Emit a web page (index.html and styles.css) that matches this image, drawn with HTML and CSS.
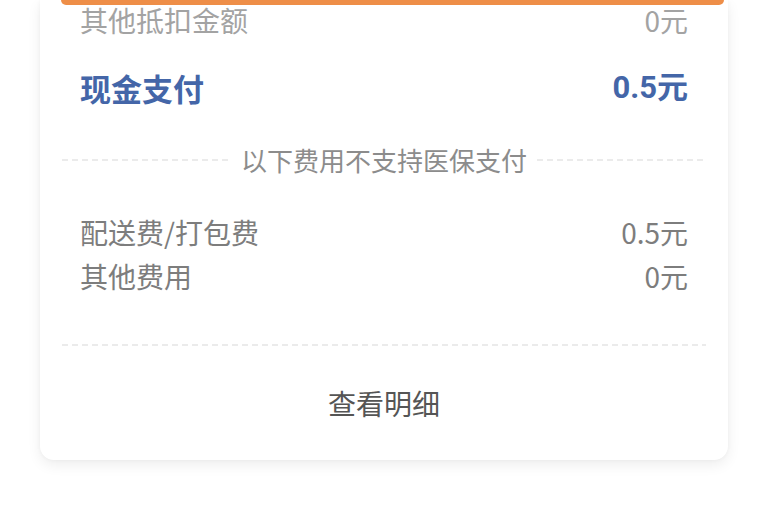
FILE: index.html
```html
<!DOCTYPE html>
<html lang="zh-CN">
<head>
<meta charset="utf-8">
<title>费用明细</title>
<link rel="stylesheet" href="styles.css">
</head>
<body>
<div class="card">
  <div class="top-bar"></div>
  <div class="row row-muted first">
    <span>其他抵扣金额</span>
    <span>0元</span>
  </div>
  <div class="row row-total">
    <span>现金支付</span>
    <span>0.5元</span>
  </div>
  <div class="divider">
    <span class="dash"></span>
    <span class="divider-text">以下费用不支持医保支付</span>
    <span class="dash"></span>
  </div>
  <div class="row row-fee r3">
    <span>配送费/打包费</span>
    <span>0.5元</span>
  </div>
  <div class="row row-fee r4">
    <span>其他费用</span>
    <span>0元</span>
  </div>
  <div class="dash full"></div>
  <div class="footer">查看明细</div>
</div>
</body>
</html>
```
FILE: styles.css
```css
html, body {
  margin: 0;
  padding: 0;
  background: #ffffff;
}
body {
  font-family: "Noto Sans CJK SC", "Noto Sans", sans-serif;
  width: 768px;
  height: 510px;
  overflow: hidden;
}
.card {
  position: relative;
  margin-left: 40px;
  width: 688px;
  height: 460px;
  box-sizing: border-box;
  padding: 0 40px;
  background: #ffffff;
  border-radius: 0 0 14px 14px;
  box-shadow: 0 5px 14px rgba(0, 0, 0, 0.07), 0 0 4px rgba(0, 0, 0, 0.04);
  display: flex;
  flex-direction: column;
}
.top-bar {
  position: absolute;
  top: 0;
  left: 21px;
  right: 4px;
  height: 5px;
  background: #ee8e48;
  border-radius: 0 0 6px 6px;
}
.row {
  display: flex;
  justify-content: space-between;
  align-items: center;
  height: 40px;
  font-size: 28px;
  line-height: 40px;
}
.row-muted {
  color: #a3a3a3;
}
.first {
  margin-top: 0;
}
.row-total {
  margin-top: 28px;
  color: #4466a8;
  font-weight: 700;
  font-size: 31px;
}
.row-total span:last-child {
  font-family: "Roboto", "Noto Sans CJK SC", sans-serif;
}
.divider {
  margin: 37px -18px 0 -18px;
  height: 30px;
  display: flex;
  align-items: center;
  gap: 10px;
}
.divider .dash {
  flex: 1;
}
.dash {
  height: 2px;
  background: repeating-linear-gradient(90deg, #ebebeb 0 6px, transparent 6px 10px);
}
.divider-text {
  font-size: 26px;
  color: #8c8c8c;
  line-height: 30px;
}
.row-fee {
  color: #7d7d7d;
}
.r3 {
  margin-top: 37px;
}
.r4 {
  margin-top: 4px;
}
.full {
  margin: 48px -18px 0 -18px;
}
.footer {
  flex: 1;
  display: flex;
  align-items: center;
  justify-content: center;
  font-size: 28px;
  color: #555555;
}
```
